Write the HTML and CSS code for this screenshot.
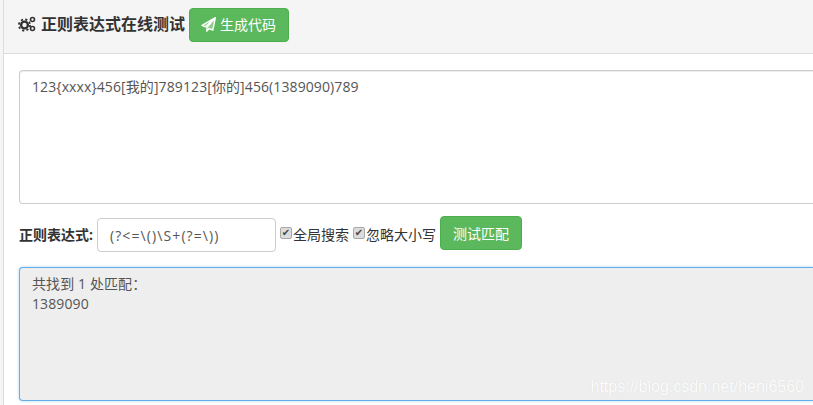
FILE: index.html
```html
<!DOCTYPE html>
<html lang="en">
<head>
  <meta charset="UTF-8" />
  <title>正则表达式在线测试</title>
  <link rel="stylesheet" href="styles.css">
</head>
<body>
  <div class="panel">
    <!-- Header -->
    <div class="panel-head">
      <svg class="icon-cogs" viewBox="0 0 18 16" width="18" height="16">
        <circle cx="6.5" cy="9" r="3.4" fill="none" stroke="#333" stroke-width="2.4"/>
        <circle cx="6.5" cy="9" r="5.6" fill="none" stroke="#333" stroke-width="1.8" stroke-dasharray="2.2 2.2"/>
        <circle cx="14.5" cy="3.5" r="2" fill="none" stroke="#333" stroke-width="1.6"/>
        <circle cx="14.5" cy="12.5" r="2" fill="none" stroke="#333" stroke-width="1.6"/>
      </svg>
      <span class="panel-title">正则表达式在线测试</span>
      <button class="btn btn-code">
        <svg class="icon-plane" viewBox="0 0 14 14" width="15" height="15">
          <path d="M13.4 .6 L1 7.8 L4.1 9.2 Z M13.4 .6 L11 12.2 L7.6 10.8 L5.5 13.2 L5.5 9.9 Z" fill="#e4f3e4" fill-opacity=".35" stroke="#fff" stroke-width="1.3" stroke-linejoin="round"/>
        </svg>
        生成代码
      </button>
    </div>

    <!-- Body -->
    <div class="panel-body">
      <textarea class="source" spellcheck="false">123{xxxx}456[我的]789123[你的]456(1389090)789</textarea>

      <div class="test-row">
        <label class="regex-label">正则表达式:</label>
        <input class="regex-input" value="(?&lt;=\()\S+(?=\))" spellcheck="false"/>
        <label class="check"><input type="checkbox" checked/>全局搜索</label>
        <label class="check"><input type="checkbox" checked/>忽略大小写</label>
        <button class="btn btn-test">测试匹配</button>
      </div>

      <div class="result">共找到 1 处匹配：<br>1389090</div>
    </div>
  </div>

  <div class="watermark">https://blog.csdn.net/heni6560</div>
</body>
</html>
```

FILE: styles.css
```css
html, body {
  height: 100%;
}
body {
  margin: 0;
  padding: 0 0 0 3px;
  box-sizing: border-box;
  overflow: hidden;
  background: #f5f5f5;
  font-family: "Open Sans", "Noto Sans CJK SC", sans-serif;
  font-size: 14px;
  color: #333;
}
.panel {
  height: 100%;
  box-sizing: border-box;
  background: #fff;
  border-left: 1px solid #ddd;
}
.panel-head {
  display: flex;
  align-items: center;
  height: 54px;
  box-sizing: border-box;
  padding: 0 0 3px 14px;
  background: #f5f5f5;
  border-bottom: 1px solid #ddd;
}
.icon-cogs {
  margin: 0 5px 3px 0;
}
.panel-title {
  margin-bottom: 5px;
  font-size: 16px;
  font-weight: bold;
  color: #333;
}
.btn {
  font-family: inherit;
  font-size: 14px;
  color: #fff;
  background: #5cb85c;
  border: 1px solid #4cae4c;
  border-radius: 4px;
  cursor: pointer;
  box-sizing: border-box;
}
.btn-code {
  display: flex;
  align-items: center;
  gap: 4px;
  width: 100px;
  height: 34px;
  margin-left: 4px;
  padding: 0 0 2px 11px;
}
.panel-body {
  padding: 16px 0 0 15px;
}
.source, .result {
  display: block;
  width: 100%;
  height: 134px;
  box-sizing: border-box;
  padding: 6px 12px;
  font-family: inherit;
  font-size: 14px;
  line-height: 20px;
  letter-spacing: 0.1px;
  color: #555;
  border-radius: 4px 0 0 4px;
}
.source {
  border: 1px solid #ccc;
  border-right: none;
  resize: none;
  outline: none;
  box-shadow: inset 0 1px 1px rgba(0, 0, 0, .075);
}
.test-row {
  display: flex;
  align-items: center;
  height: 34px;
  margin: 12px 0 17px;
}
.regex-label {
  font-size: 14px;
  font-weight: bold;
  width: 78px;
  margin-top: 2px;
}
.regex-input {
  width: 179px;
  height: 34px;
  box-sizing: border-box;
  margin-top: 4px;
  padding: 0 12px;
  font-family: inherit;
  font-size: 14px;
  letter-spacing: 1.1px;
  color: #555;
  border: 1px solid #ccc;
  border-radius: 4px;
  outline: none;
}
.check {
  display: flex;
  align-items: center;
  margin: 2px 0 0 4px;
  font-size: 14px;
}
.check input {
  appearance: none;
  display: flex;
  align-items: center;
  justify-content: center;
  width: 12px;
  height: 12px;
  margin: 0 1px 2px 0;
  box-sizing: border-box;
  background: #dcdcdc;
  border: 1px solid #a8a8a8;
  border-radius: 2px;
}
.check input::after {
  content: "✔";
  font-family: "DejaVu Sans", sans-serif;
  font-size: 10px;
  line-height: 10px;
  color: #444;
}
.btn-test {
  width: 82px;
  height: 34px;
  margin-left: 4px;
  padding-bottom: 2px;
}
.result {
  background: #eee;
  border: 1px solid #66afe9;
  border-right: none;
  box-shadow: 0 0 3px rgba(102, 175, 233, .6);
}
.watermark {
  position: absolute;
  right: 9px;
  bottom: 9px;
  font-family: "Liberation Sans", sans-serif;
  font-size: 16px;
  color: #fff;
  text-shadow: 0 0 1px rgba(0, 0, 0, .12);
  opacity: .85;
}
```
